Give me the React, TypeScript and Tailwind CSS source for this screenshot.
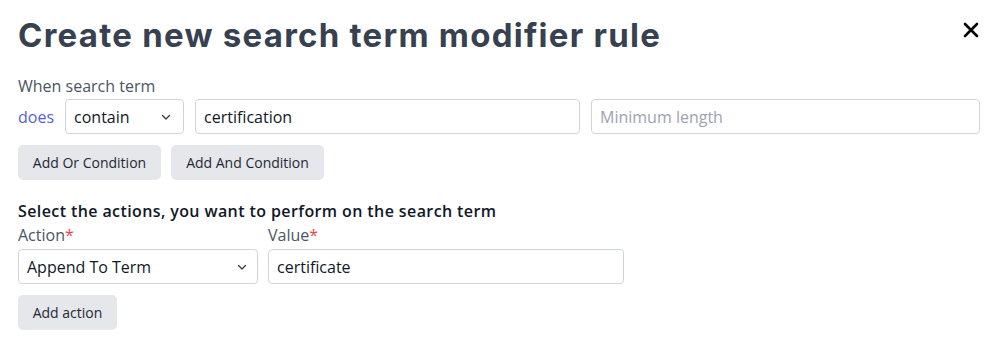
import React from "react";

const Chevron = () => (
  <svg width="14" height="14" viewBox="0 0 20 20" fill="none" stroke="#374151" strokeWidth="2" strokeLinecap="round" strokeLinejoin="round">
    <path d="M5 8l5 5 5-5" />
  </svg>
);

export default function App() {
  return (
    <div className="w-[997px] h-[341px] bg-white pl-[18px] pr-[17px] pt-[12px] text-[#1f2937]" style={{ fontFamily: '"Open Sans", "Noto Sans", sans-serif' }}>
      <div className="flex items-start justify-between">
        <h1 className="text-[33px] leading-[46px] font-bold text-[#374151] tracking-[1.25px]" style={{ fontFamily: 'Inter, "Noto Sans", sans-serif' }}>
          Create new search term modifier rule
        </h1>
        <button className="mt-[10px] mr-[1px]">
          <svg width="16" height="16" viewBox="0 0 16 16" stroke="#000" strokeWidth="2.6" strokeLinecap="round">
            <path d="M2 2l12 12M14 2L2 14" />
          </svg>
        </button>
      </div>
      <div className="mt-[18px] text-[16px] leading-[21px] text-[#4b5563]">When search term</div>
      <div className="mt-[2px] flex items-center gap-[11px]">
        <span className="text-[16px] text-[#5460e0]">does</span>
        <div className="w-[119px] h-[35px] border border-[#d1d5db] rounded-[4px] flex items-center justify-between pl-[8px] pr-[10px] text-[16px] text-[#111827]">
          <span>contain</span>
          <Chevron />
        </div>
        <div className="flex-1 h-[35px] border border-[#d1d5db] rounded-[4px] flex items-center px-[8px] text-[16px] text-[#111827]">certification</div>
        <div className="w-[389px] h-[35px] border border-[#d1d5db] rounded-[4px] flex items-center px-[8px] text-[16px] text-[#9ca3af]">Minimum length</div>
      </div>
      <div className="mt-[11px] flex gap-[10px]">
        <button className="h-[35px] w-[143px] rounded-[5px] bg-[#e5e7eb] text-[14px] text-[#1f2937]">Add Or Condition</button>
        <button className="h-[35px] w-[153px] rounded-[5px] bg-[#e5e7eb] text-[14px] text-[#1f2937]">Add And Condition</button>
      </div>
      <div className="mt-[21px] text-[16px] leading-[21px] font-semibold tracking-[0.4px] text-[#111827]">Select the actions, you want to perform on the search term</div>
      <div className="flex gap-[10px] mt-[3px]">
        <div className="w-[240px]">
          <div className="text-[16px] leading-[21px] text-[#4b5563]">Action<span className="text-[#ef4444]">*</span></div>
          <div className="mt-[3px] h-[35px] border border-[#d1d5db] rounded-[4px] flex items-center justify-between pl-[8px] pr-[8px] text-[16px] text-[#111827]">
            <span>Append To Term</span>
            <Chevron />
          </div>
        </div>
        <div className="w-[356px]">
          <div className="text-[16px] leading-[21px] text-[#4b5563]">Value<span className="text-[#ef4444]">*</span></div>
          <div className="mt-[3px] h-[35px] border border-[#d1d5db] rounded-[4px] flex items-center px-[8px] text-[16px] text-[#111827]">certificate</div>
        </div>
      </div>
      <button className="mt-[11px] h-[35px] w-[99px] rounded-[5px] bg-[#e5e7eb] text-[14px] text-[#1f2937]">Add action</button>
    </div>
  );
}
